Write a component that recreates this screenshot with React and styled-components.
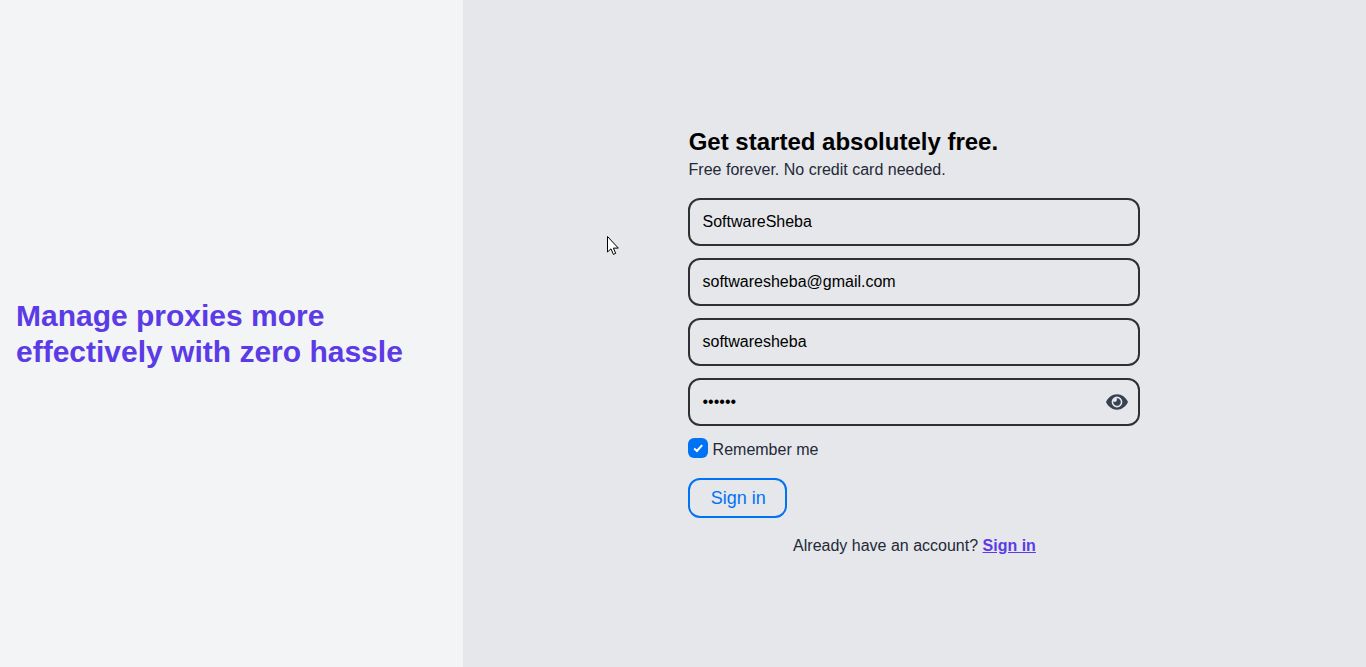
import React from 'react';
import styled, { createGlobalStyle } from 'styled-components';

const Global = createGlobalStyle`
  *, *::before, *::after { box-sizing: border-box; }
  body { margin: 0; font: 16px/24px "Liberation Sans", Arial, sans-serif; color: #1f2937; }
  h1, h2, p { margin: 0; }
`;
const Page = styled.main`display: grid; grid-template-columns: 462.6px 1fr; height: 667px; overflow: hidden;`;
const Intro = styled.section`background: #f3f4f6; padding: 0 16px; display: flex; align-items: center;`;
const Headline = styled.h1`font-size: 30px; line-height: 36px; color: #5b3be6;`;
const Panel = styled.section`background: #e5e7eb; display: flex; justify-content: center; padding-top: 126px;`;
const Form = styled.form`width: 452px;`;
const Title = styled.h2`padding-left: .4px; font-size: 24px; line-height: 32px; color: #000;`;
const Subtitle = styled.p`padding-left: .3px; margin-bottom: 16px;`;
const Fields = styled.div`display: grid; gap: 12px;`;
const Field = styled.label`
  display: flex; align-items: center; height: 48px; border: 2px solid #2e3033;
  border-radius: 12px; padding: 0 10px 0 12.2px; color: #374151;
`;
const Input = styled.input`
  flex: 1; min-width: 0; border: 0; outline: 0; padding: 0; background: transparent;
  font: inherit; color: #000;
`;
const Remember = styled.label`display: flex; align-items: center; gap: 4.3px; margin-top: 12px; height: 20px;`;
const RememberText = styled.span`padding-top: 3px;`;
const Check = styled.span`
  width: 20px; height: 20px; border-radius: 6px; background: #0072f5;
  display: flex; align-items: center; justify-content: center;
`;
const Button = styled.button`
  display: block; margin-top: 20px; width: 99px; height: 40px; padding: 0 0 0 1px; border: 2px solid #0072f5;
  border-radius: 12px; background: transparent; color: #0072f5; font: 18px "Liberation Sans", sans-serif;
`;
const Footer = styled.p`margin-top: 16px; padding-left: .4px; text-align: center;`;
const Link = styled.a`color: #5b3be6; font-weight: 700; text-decoration: underline;`;
const Pointer = styled.svg`position: absolute; left: 607px; top: 236px;`;

const EyeIcon = () => (
  <svg width="22" height="22" viewBox="0 0 22 22" aria-hidden="true">
    <path fill="currentColor" fillRule="evenodd" d="M0 11C2.3 6.3 6.2 3.3 11 3.3S19.7 6.3 22 11C19.7 15.7 15.8 18.7 11 18.7S2.3 15.7 0 11ZM16.4 11A5.4 5.4 0 1 0 5.6 11A5.4 5.4 0 1 0 16.4 11Z" />
    <path fill="currentColor" d="M11 7.2A3.8 3.8 0 1 1 7.3 10.2A1.9 1.9 0 0 0 10.4 7.3Q10.7 7.2 11 7.2Z" />
  </svg>
);

export default function App() {
  return (
    <Page>
      <Global />
      <Intro><Headline>Manage proxies more effectively with zero hassle</Headline></Intro>
      <Panel>
        <Form>
          <Title>Get started absolutely free.</Title>
          <Subtitle>Free forever. No credit card needed.</Subtitle>
          <Fields>
            <Field><Input defaultValue="SoftwareSheba" /></Field>
            <Field><Input defaultValue="softwaresheba@gmail.com" /></Field>
            <Field><Input defaultValue="softwaresheba" /></Field>
            <Field><Input type="password" defaultValue="secret" /><EyeIcon /></Field>
          </Fields>
          <Remember>
            <Check>
              <svg width="12" height="12" viewBox="0 0 12 12" fill="none" stroke="#fff" strokeWidth="2"><path d="M2.2 6.5 4.9 9 10.2 3.2" /></svg>
            </Check>
            <RememberText>Remember me</RememberText>
          </Remember>
          <Button type="button">Sign in</Button>
          <Footer>Already have an account? <Link href="#">Sign in</Link></Footer>
        </Form>
      </Panel>
      <Pointer width="13" height="20" viewBox="0 0 13 20"><path d="M.5.5v15.5l3.5-3.2 2.4 5.6 2.3-1-2.3-5.3h4.9z" fill="#fff" stroke="#000" /></Pointer>
    </Page>
  );
}
